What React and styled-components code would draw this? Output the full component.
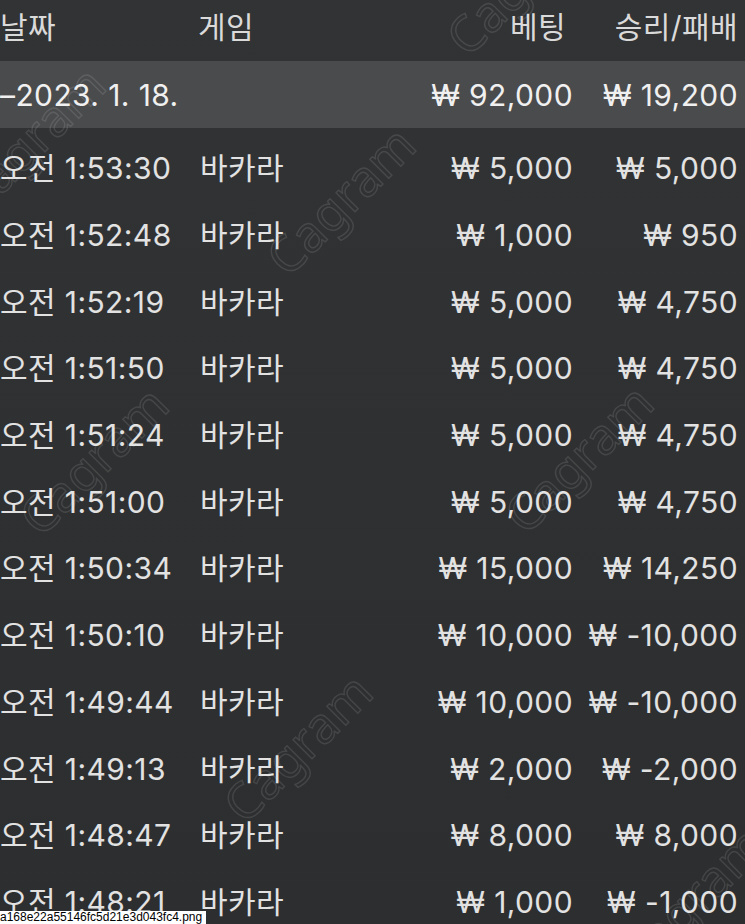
import React from 'react';
import styled, { createGlobalStyle } from 'styled-components';

const GlobalStyle = createGlobalStyle`
  html, body {
    margin: 0;
    padding: 0;
    background: #2f3031;
  }
  body {
    font-family: "Inter", "Noto Sans CJK KR", sans-serif;
  }
`;

const Screen = styled.div`
  position: relative;
  width: 745px;
  height: 924px;
  overflow: hidden;
  background: linear-gradient(180deg, #323334 0%, #2f3031 50%, #2d2e2f 100%);
  color: #e2e2e2;
  font-size: 30px;
  line-height: 36px;
  letter-spacing: 0.4px;
`;

const Row = styled.div`
  display: grid;
  grid-template-columns: 198px 210px 165px 165px;
  align-items: center;
  height: ${(p) => p.$height}px;
  padding-right: 7px;
  background: ${(p) => p.$bg || 'transparent'};
  color: ${(p) => p.$color || 'inherit'};
`;

const HeaderRow = styled(Row)`
  align-items: start;
  padding-top: 9px;
  box-sizing: border-box;
`;

const Cell = styled.div`
  white-space: nowrap;
  text-align: ${(p) => (p.$right ? 'right' : 'left')};
  padding-left: ${(p) => p.$indent || 0}px;
  padding-right: ${(p) => p.$gap || 0}px;
`;

const List = styled.div`
  display: flex;
  flex-direction: column;
  margin-top: 7px;
`;

const Watermark = styled.div`
  position: absolute;
  left: ${(p) => p.$x}px;
  top: ${(p) => p.$y}px;
  transform: translate(-50%, -50%) rotate(-45deg);
  font-family: "Noto Sans", sans-serif;
  font-size: 50px;
  line-height: 1;
  letter-spacing: 0;
  color: transparent;
  -webkit-text-stroke: 1.4px rgba(255, 255, 255, 0.11);
  pointer-events: none;
  white-space: nowrap;
`;

const FileTag = styled.div`
  position: absolute;
  left: 0;
  bottom: 0;
  padding: 0 4px 0 0;
  background: #ffffff;
  color: #000000;
  font-family: "Liberation Sans", sans-serif;
  font-size: 12px;
  line-height: 13px;
  letter-spacing: 0;
`;

const rows = [
  ['오전 1:53:30', '₩ 5,000', '₩ 5,000'],
  ['오전 1:52:48', '₩ 1,000', '₩ 950'],
  ['오전 1:52:19', '₩ 5,000', '₩ 4,750'],
  ['오전 1:51:50', '₩ 5,000', '₩ 4,750'],
  ['오전 1:51:24', '₩ 5,000', '₩ 4,750'],
  ['오전 1:51:00', '₩ 5,000', '₩ 4,750'],
  ['오전 1:50:34', '₩ 15,000', '₩ 14,250'],
  ['오전 1:50:10', '₩ 10,000', '₩ -10,000'],
  ['오전 1:49:44', '₩ 10,000', '₩ -10,000'],
  ['오전 1:49:13', '₩ 2,000', '₩ -2,000'],
  ['오전 1:48:47', '₩ 8,000', '₩ 8,000'],
  ['오전 1:48:21', '₩ 1,000', '₩ -1,000'],
];

const marks = [
  [340, 200],
  [93, 460],
  [578, 458],
  [297, 747],
  [30, 140],
  [520, -20],
  [690, 900],
];

const App = () => {
  return (
    <>
      <GlobalStyle />
      <Screen>
        <HeaderRow $height={61} $color="#dadada">
          <Cell>날짜</Cell>
          <Cell>게임</Cell>
          <Cell $right $gap={7}>베팅</Cell>
          <Cell $right>승리/패배</Cell>
        </HeaderRow>
        <Row $height={67} $bg="#4a4b4c" $color="#f0f0f0">
          <Cell>–2023. 1. 18.</Cell>
          <Cell />
          <Cell $right>₩ 92,000</Cell>
          <Cell $right>₩ 19,200</Cell>
        </Row>
        <List>
          {rows.map(([time, bet, result]) => (
            <Row key={time} $height={66.7}>
              <Cell>{time}</Cell>
              <Cell $indent={2}>바카라</Cell>
              <Cell $right>{bet}</Cell>
              <Cell $right>{result}</Cell>
            </Row>
          ))}
        </List>
        {marks.map(([x, y]) => (
          <Watermark key={`${x}-${y}`} $x={x} $y={y}>
            Cagram
          </Watermark>
        ))}
        <FileTag>a168e22a55146fc5d21e3d043fc4.png</FileTag>
      </Screen>
    </>
  );
};

export default App;
